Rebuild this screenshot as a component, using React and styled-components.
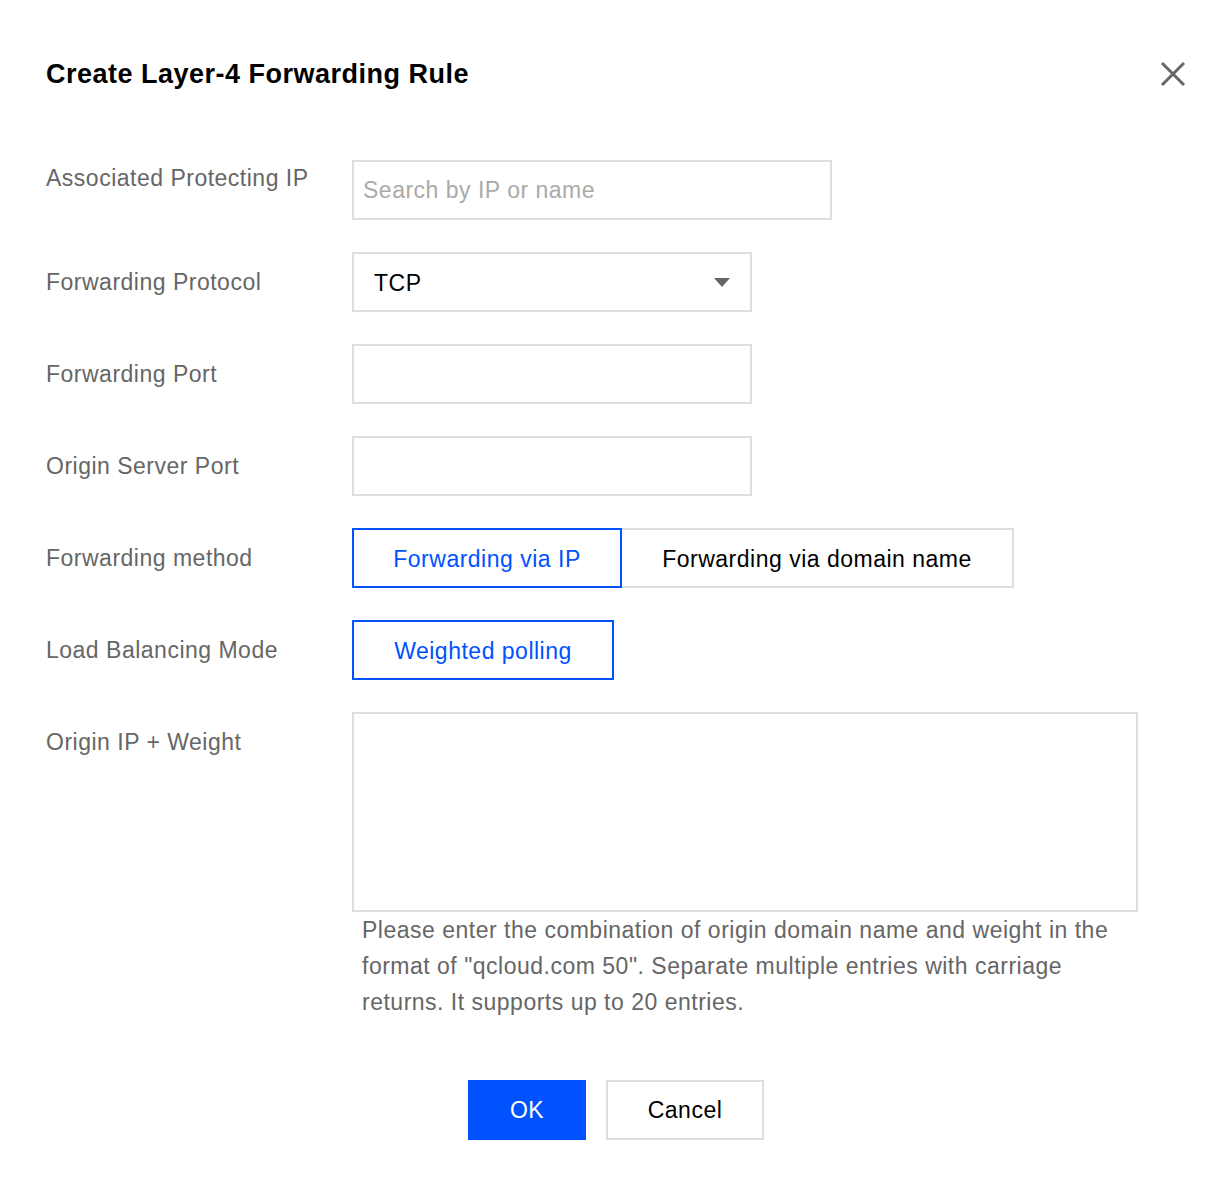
import React from "react";
import styled, { createGlobalStyle } from "styled-components";

const GlobalStyle = createGlobalStyle`
  body {
    margin: 0;
    background: #fff;
    font-family: "Liberation Sans", Arial, Helvetica, sans-serif;
    letter-spacing: 0.5px;
  }
`;

const BLUE = "#0052ff";

export default function App() {
  return (
    <>
      <GlobalStyle />
      <Dialog>
        <Header>
          <Title>Create Layer-4 Forwarding Rule</Title>
          <CloseButton aria-label="close">
            <svg width="26" height="26" viewBox="0 0 26 26">
              <path d="M2 2 L24 24 M24 2 L2 24" stroke="#666" strokeWidth="3" fill="none" />
            </svg>
          </CloseButton>
        </Header>

        <Form>
          <Label $top={0}>Associated Protecting IP</Label>
          <Field>
            <Input $width={480} placeholder="Search by IP or name" />
          </Field>

          <Label>Forwarding Protocol</Label>
          <Field>
            <Select>
              <span>TCP</span>
              <svg width="16" height="10" viewBox="0 0 16 10">
                <path d="M0 0 L16 0 L8 9 Z" fill="#666" />
              </svg>
            </Select>
          </Field>

          <Label>Forwarding Port</Label>
          <Field>
            <Input $width={400} />
          </Field>

          <Label>Origin Server Port</Label>
          <Field>
            <Input $width={400} />
          </Field>

          <Label>Forwarding method</Label>
          <Field>
            <Segment>
              <SegmentItem $active $width={270}>Forwarding via IP</SegmentItem>
              <SegmentItem $width={392}>Forwarding via domain name</SegmentItem>
            </Segment>
          </Field>

          <Label>Load Balancing Mode</Label>
          <Field>
            <Segment>
              <SegmentItem $active $width={262}>Weighted polling</SegmentItem>
            </Segment>
          </Field>

          <Label>Origin IP + Weight</Label>
          <Field>
            <TextArea />
            <Help>
              Please enter the combination of origin domain name and weight in the
              format of "qcloud.com 50". Separate multiple entries with carriage
              returns. It supports up to 20 entries.
            </Help>
          </Field>
        </Form>

        <Footer>
          <Button $primary>OK</Button>
          <Button>Cancel</Button>
        </Footer>
      </Dialog>
    </>
  );
}

const Dialog = styled.div`
  width: 1230px;
  min-height: 1182px;
  box-sizing: border-box;
  padding: 56px 44px 0 46px;
`;

const Header = styled.div`
  display: flex;
  align-items: center;
  justify-content: space-between;
`;

const Title = styled.h1`
  margin: 0;
  font-size: 27px;
  line-height: 36px;
  font-weight: 700;
  color: #000;
`;

const CloseButton = styled.button`
  border: none;
  background: none;
  padding: 0;
  width: 26px;
  height: 26px;
  display: flex;
  cursor: pointer;
`;

const Form = styled.div`
  margin-top: 68px;
  display: grid;
  grid-template-columns: 306px 1fr;
  row-gap: 32px;
`;

const Label = styled.div`
  font-size: 23px;
  line-height: 36px;
  color: #666;
  padding-top: ${(p) => (p.$top !== undefined ? p.$top : 12)}px;
`;

const Field = styled.div`
  display: flex;
  flex-direction: column;
`;

const Input = styled.input`
  width: ${(p) => p.$width}px;
  height: 60px;
  box-sizing: border-box;
  border: 2px solid #ddd;
  padding: 0 9px;
  font-family: inherit;
  letter-spacing: inherit;
  font-size: 23px;
  color: #000;
  outline: none;
  &::placeholder {
    color: #aaa;
  }
`;

const Select = styled.div`
  width: 400px;
  height: 60px;
  box-sizing: border-box;
  border: 2px solid #ddd;
  padding: 2px 20px 0 20px;
  display: flex;
  align-items: center;
  justify-content: space-between;
  font-size: 23px;
  color: #000;
`;

const Segment = styled.div`
  display: flex;
`;

const SegmentItem = styled.div`
  width: ${(p) => p.$width}px;
  height: 60px;
  box-sizing: border-box;
  display: flex;
  align-items: center;
  justify-content: center;
  padding-top: 2px;
  font-size: 23px;
  color: ${(p) => (p.$active ? BLUE : "#000")};
  border: 2px solid ${(p) => (p.$active ? BLUE : "#ddd")};
  & + & {
    border-left: none;
  }
`;

const TextArea = styled.textarea`
  width: 786px;
  height: 200px;
  box-sizing: border-box;
  border: 2px solid #ddd;
  resize: none;
  outline: none;
  font-family: inherit;
  font-size: 23px;
`;

const Help = styled.p`
  margin: 0;
  width: 786px;
  box-sizing: border-box;
  padding: 0 10px;
  font-size: 23px;
  line-height: 36px;
  color: #666;
`;

const Footer = styled.div`
  margin-top: 60px;
  display: flex;
  justify-content: center;
  gap: 20px;
`;

const Button = styled.button`
  height: 60px;
  min-width: ${(p) => (p.$primary ? 118 : 158)}px;
  box-sizing: border-box;
  padding-top: 2px;
  border: 2px solid ${(p) => (p.$primary ? BLUE : "#ddd")};
  background: ${(p) => (p.$primary ? BLUE : "#fff")};
  color: ${(p) => (p.$primary ? "#fff" : "#000")};
  font-family: inherit;
  letter-spacing: inherit;
  font-size: 23px;
  cursor: pointer;
`;
